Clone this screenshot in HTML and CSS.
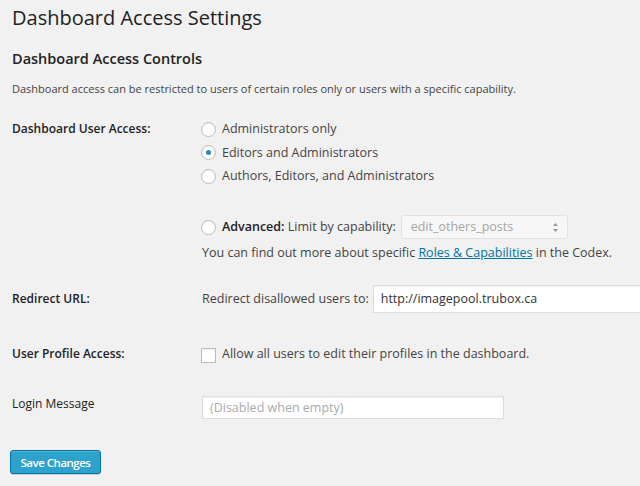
FILE: index.html
```html
<!DOCTYPE html>
<html>
<head>
<meta charset="utf-8">
<link rel="stylesheet" href="styles.css">
</head>
<body>
<div class="wrap">
  <h2 class="title">Dashboard Access Settings</h2>
  <h3 class="subtitle">Dashboard Access Controls</h3>
  <p class="desc">Dashboard access can be restricted to users of certain roles only or users with a specific capability.</p>

  <div class="form">
    <div class="row row-access">
      <div class="label">Dashboard User Access:</div>
      <div class="field">
        <div class="radios">
          <label class="opt"><span class="radio"></span>Administrators only</label>
          <label class="opt"><span class="radio checked"></span>Editors and Administrators</label>
          <label class="opt"><span class="radio"></span>Authors, Editors, and Administrators</label>
        </div>
        <div class="advanced">
          <label class="opt"><span class="radio"></span><b class="adv">Advanced:</b>&nbsp;Limit by capability:</label>
          <div class="select">edit_others_posts<span class="arrows"><svg width="7" height="11" viewBox="0 0 7 11"><path d="M3.5 1 L6 4 H1 Z M3.5 10 L6 7 H1 Z" fill="#999"/></svg></span></div>
        </div>
        <p class="note">You can find out more about specific <a href="#">Roles &amp; Capabilities</a> in the Codex.</p>
      </div>
    </div>

    <div class="row row-redirect">
      <div class="label">Redirect URL:</div>
      <div class="field inline">
        <span class="inlabel">Redirect disallowed users to:</span>
        <div class="input url">http://imagepool.trubox.ca</div>
      </div>
    </div>

    <div class="row row-profile">
      <div class="label">User Profile Access:</div>
      <div class="field">
        <label class="opt"><span class="check"></span>Allow all users to edit their profiles in the dashboard.</label>
      </div>
    </div>

    <div class="row row-login">
      <div class="label normal">Login Message</div>
      <div class="field">
        <div class="input msg">(Disabled when empty)</div>
      </div>
    </div>
  </div>

  <button class="btn">Save Changes</button>
</div>
</body>
</html>
```

FILE: styles.css
```css
html, body {
  margin: 0;
  padding: 0;
  background: #f1f1f1;
  width: 640px;
  height: 486px;
  overflow: hidden;
}
body {
  font-family: "Open Sans", "Noto Sans", sans-serif;
  color: #444;
  font-size: 12.5px;
}
.wrap {
  padding: 0 0 0 12px;
}
.title {
  margin: 0;
  padding-top: 3px;
  font-size: 20px;
  font-weight: 400;
  line-height: 30px;
  color: #222;
}
.subtitle {
  margin: 16px 0 0;
  font-size: 14.5px;
  font-weight: 600;
  line-height: 20px;
  color: #222;
}
.desc {
  margin: 12px 0 0;
  font-size: 11px;
  line-height: 16px;
}
.form {
  margin-top: 22px;
}
.row {
  display: grid;
  grid-template-columns: 190px 1fr;
}
.label {
  font-size: 12px;
  font-weight: 600;
  color: #222;
  line-height: 20px;
}
.label.normal {
  font-weight: 400;
}
.field {
  font-size: 12.5px;
  line-height: 20px;
  min-width: 0;
}
.radios {
  display: flex;
  flex-direction: column;
  gap: 3.5px;
}
.opt {
  display: flex;
  align-items: center;
  white-space: nowrap;
}
.radio, .check {
  width: 15px;
  height: 15px;
  border: 1px solid #bbb;
  background: #fff;
  box-shadow: inset 0 1px 2px rgba(0,0,0,.07);
  margin-right: 6px;
  box-sizing: border-box;
  flex: none;
  display: flex;
  align-items: center;
  justify-content: center;
  margin-left: -1px;
}
.radio {
  border-radius: 50%;
}
.radio.checked::after {
  content: "";
  width: 5px;
  height: 5px;
  border-radius: 50%;
  background: #1e8cbe;
}
.adv {
  font-weight: 600;
  color: #222;
}
.advanced {
  margin-top: 29px;
  display: flex;
  align-items: center;
}
.select {
  margin-left: 5px;
  width: 167px;
  height: 24px;
  box-sizing: border-box;
  border: 1px solid #e2e2e2;
  background: #f7f7f7;
  color: #a5a5a5;
  border-radius: 3px;
  padding: 0 8px 0 9px;
  display: flex;
  align-items: center;
  justify-content: space-between;
  flex: none;
}
.arrows {
  display: flex;
}
.note {
  margin: 4px 0 0;
  white-space: nowrap;
}
.note a {
  color: #0074a2;
}
.row-redirect {
  margin-top: 22px;
}
.row-redirect .label {
  line-height: 28px;
}
.inline {
  display: flex;
  align-items: center;
  white-space: nowrap;
  overflow: hidden;
}
.inlabel {
  margin-right: 4px;
  flex: none;
}
.input {
  box-sizing: border-box;
  border: 1px solid #ddd;
  background: #fff;
  box-shadow: inset 0 1px 2px rgba(0,0,0,.07);
  padding: 0 7px;
  display: flex;
  align-items: center;
  font-size: 12.5px;
  color: #333;
  white-space: nowrap;
}
.url {
  width: 300px;
  height: 28px;
  flex: none;
}
.msg {
  width: 302px;
  height: 23px;
  color: #aaa;
}
.row-profile {
  margin-top: 31px;
}
.check {
  border-radius: 0;
  width: 15px;
  height: 15px;
  margin-right: 6px;
  margin-top: 2px;
}
.row-login {
  margin-top: 30px;
}
.row-login .field {
  padding-top: 2px;
}
.btn {
  display: block;
  margin-top: 31px;
  margin-left: -2px;
  width: 91px;
  height: 24px;
  background: #2ea2cc;
  border: 1px solid #0074a2;
  border-radius: 3px;
  box-shadow: inset 0 1px 0 rgba(120,200,230,.5), 0 1px 0 rgba(0,0,0,.15);
  color: #fff;
  font-family: "Open Sans", sans-serif;
  font-size: 11.5px;
  font-weight: 600;
  letter-spacing: -0.5px;
  padding: 0;
}
```
